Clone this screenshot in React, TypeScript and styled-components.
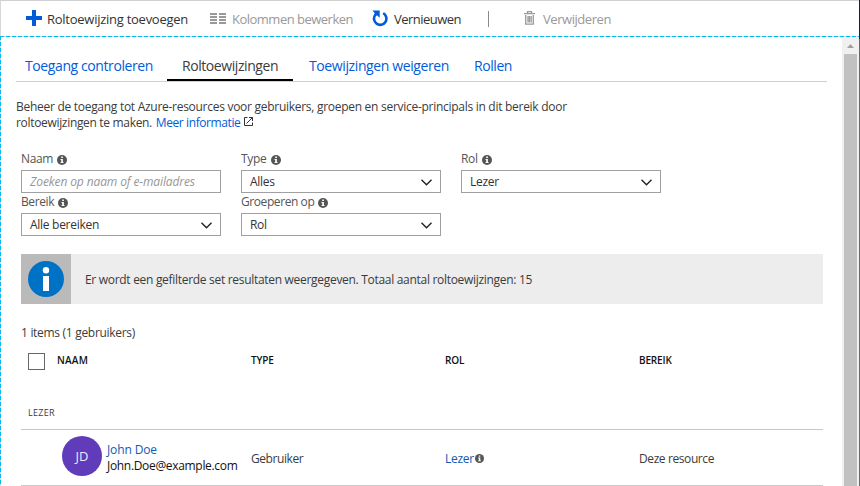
import React from 'react';
import styled, { createGlobalStyle } from 'styled-components';

const GlobalStyle = createGlobalStyle`
  * { box-sizing: border-box; }
  body {
    margin: 0;
    overflow: hidden;
    background: #fff;
    color: #3b3b3b;
    font: 12px/16px 'Open Sans', 'Noto Sans', sans-serif;
  }
  svg { display: block; flex: none; }
`;

const Text = styled.span<{ $track?: number }>`
  display: inline-block;
  white-space: nowrap;
  letter-spacing: ${(p) => p.$track ?? -0.3}px;
`;

const Window = styled.div`
  display: grid;
  grid-template-columns: 859px 1px;
  height: 486px;
`;

const WindowEdge = styled.div`
  background: linear-gradient(#202124 39px, #69696b 39px);
`;

const Blade = styled.div`
  display: flex;
  flex-direction: column;
  height: 486px;
  min-width: 0;
`;

const Toolbar = styled.header`
  display: flex;
  align-items: center;
  height: 36px;
  padding-left: 25px;
  border-top: 1px solid #d0d0d0;
  border-left: 1px solid #d8d8d8;
  font-size: 13px;
`;

const Command = styled.button<{ $width: number; $gap: number; $muted?: boolean }>`
  display: flex;
  align-items: center;
  gap: ${(p) => p.$gap}px;
  width: ${(p) => p.$width}px;
  padding: 0;
  border: 0;
  background: none;
  font: inherit;
  color: ${(p) => (p.$muted ? '#999' : '#333')};
  svg { margin-bottom: 1px; }
`;

const Separator = styled.div`
  width: 1px;
  height: 16px;
  margin: 1px 35px 0 0;
  background: #8a8a8a;
`;

const dashX = 'repeating-linear-gradient(90deg, #00bcf2 0 4px, #d5dde0 4px 6px)';
const dashY = 'repeating-linear-gradient(180deg, #00bcf2 0 4px, #d5dde0 4px 6px)';

const Pane = styled.div`
  flex: 1;
  display: flex;
  min-height: 0;
  padding: 1px 0 0 1px;
  background: ${dashX} 0 0 / 100% 1px no-repeat, ${dashY} 0 0 / 1px 100% no-repeat;
`;

const Content = styled.main`
  flex: 1;
  min-width: 0;
  padding-left: 15px;
`;

const ScrollTrack = styled.div`
  display: flex;
  flex-direction: column;
  align-items: center;
  width: 17px;
  padding: 7px 1px 0 0;
  background: #f0f0f0;
`;

const ScrollThumb = styled.div`
  flex: 1;
  width: 13px;
  margin: 6px 0 0 1px;
  background: #c1c1c1;
`;

const Tabs = styled.nav`
  display: flex;
  width: 811px;
  height: 45px;
  border-bottom: 1px solid #d0d0d0;
  font-size: 14px;
`;

const Tab = styled.a<{ $width: number; $inset: number; $active?: boolean }>`
  width: ${(p) => p.$width}px;
  padding: 21px 0 0 ${(p) => p.$inset}px;
  color: ${(p) => (p.$active ? '#3b3b3b' : '#015cda')};
  border-bottom: 2px solid ${(p) => (p.$active ? '#000' : 'transparent')};
`;

const Intro = styled.p`
  margin: 17px 0 19px;
`;

const IntroLine = styled.span`
  display: flex;
  align-items: center;
  svg { margin: -3px 0 0 4px; }
`;

const Link = styled(Text)`
  margin-left: 1px;
  color: #015cda;
`;

const Section = styled.div`
  width: 802px;
  margin-left: 5px;
`;

const Filters = styled.form`
  display: grid;
  grid-template-columns: repeat(3, 200px);
  column-gap: 20px;
`;

const Field = styled.label`
  display: block;
  height: 43px;
`;

const FieldLabel = styled.span`
  display: flex;
  align-items: center;
  gap: 4px;
  height: 20px;
  padding-bottom: 3px;
  color: #555;
  svg { margin-top: 3px; }
`;

const Control = styled.span<{ $placeholder?: boolean }>`
  display: flex;
  align-items: center;
  justify-content: space-between;
  height: 23px;
  padding: 0 8px;
  border: 1px solid #a0a0a0;
  color: ${(p) => (p.$placeholder ? '#969696' : '#333')};
  font-style: ${(p) => (p.$placeholder ? 'italic' : 'normal')};
  svg { margin-top: 2px; }
`;

const Banner = styled.div`
  display: flex;
  align-items: center;
  height: 50px;
  margin-top: 18px;
  background: #ededed;
`;

const BannerIcon = styled.div`
  display: grid;
  place-items: center;
  width: 50px;
  height: 50px;
  margin-right: 14px;
  background: #bababa;
`;

const BannerText = styled(Text)`
  padding-top: 2px;
`;

const Count = styled.div`
  height: 49px;
  padding-top: 21px;
`;

const Columns = styled.div`
  display: grid;
  grid-template-columns: 230px 194px 194px 1fr;
`;

const HeaderRow = styled(Columns)`
  height: 17px;
  color: #111;
  font-size: 10px;
  font-weight: 600;
  line-height: 15px;
`;

const HeaderName = styled.div`
  display: flex;
  padding-left: 7px;
`;

const Checkbox = styled.span`
  width: 17px;
  height: 17px;
  margin-right: 12px;
  border: 1px solid #666;
`;

const GroupRow = styled.div`
  height: 60px;
  padding: 35px 0 0 7px;
  border-bottom: 1px solid #c8c8c8;
  font-size: 9px;
`;

const DataRow = styled(Columns)`
  height: 56px;
  border-bottom: 1px solid #c8c8c8;
`;

const Cell = styled.div`
  display: flex;
  align-items: center;
  padding-top: 2px;
`;

const RoleCell = styled(Cell)`
  gap: 1px;
  svg { margin-top: -1px; }
`;

const Person = styled(Cell)`
  padding: 0 0 4px 41px;
`;

const Avatar = styled.span`
  display: grid;
  place-items: center;
  width: 40px;
  height: 40px;
  margin-right: 5px;
  border-radius: 50%;
  background: #603cba;
  color: #eee8ff;
  font-size: 13px;
`;

const PersonText = styled.div`
  display: flex;
  flex-direction: column;
  padding-top: 4px;
  color: #111;
`;

const DataLink = styled(Text)`
  color: #0f5bb5;
`;

const InfoIcon = ({ size = 10 }: { size?: number }) => (
  <svg width={size} height={size} viewBox="0 0 10 10">
    <circle cx="5" cy="5" r="5" fill="#555" />
    <path d="M4.2 1.6h1.7v1.4H4.2zM3.5 4h2.4v3.2h.8v.9H3.4v-.9h.8V4.9h-.7z" fill="#fff" />
  </svg>
);

const PlusIcon = () => (
  <svg width="16" height="16" viewBox="0 0 16 16">
    <path d="M6 0h4v6h6v4h-6v6H6v-6H0V6h6z" fill="#015cda" />
  </svg>
);

const ColumnsIcon = () => (
  <svg width="16" height="11" viewBox="0 0 16 11">
    <path d="M0 0h7v2H0zM9 0h7v2H9zM0 3h7v2H0zM9 3h7v2H9zM0 6h7v2H0zM9 6h7v2H9zM0 9h7v2H0zM9 9h7v2H9z" fill="#999" />
  </svg>
);

const RefreshIcon = () => (
  <svg width="16" height="17" viewBox="0 0 16 17">
    <path d="M11.2 3.2A6.2 6.2 0 1 1 3.4 4.7" fill="none" stroke="#015cda" strokeWidth="2.6" />
    <path d="M.5.5h7.2v7.2L5.2 5.4 3 6 2 4.6l.8-1.4z" fill="#015cda" />
  </svg>
);

const TrashIcon = () => (
  <svg width="11" height="14" viewBox="0 0 11 14">
    <path d="M3.5 2V.7h4V2M0 2.7h11M1.7 4v9.2h7.6V4M4 5v6.5M5.5 5v6.5M7.2 5v6.5" fill="none" stroke="#999" strokeWidth="1.3" />
  </svg>
);

const ExternalIcon = () => (
  <svg width="9" height="9" viewBox="0 0 9 9">
    <path d="M3.5.5h-3v8h8v-3M5 .5h3.5V4M8.5.5l-6 6" fill="none" stroke="#333" />
  </svg>
);

const ChevronIcon = () => (
  <svg width="11" height="7" viewBox="0 0 11 7">
    <path d="M.5.7l5 5 5-5" fill="none" stroke="#222" strokeWidth="1.4" />
  </svg>
);

const BigInfoIcon = () => (
  <svg width="36" height="36" viewBox="0 0 36 36">
    <circle cx="18" cy="18" r="18" fill="#0072c6" />
    <circle cx="18" cy="9.3" r="3.2" fill="#fff" />
    <path d="M15 15h6v15h-6z" fill="#fff" />
  </svg>
);

const ScrollUpIcon = () => (
  <svg width="7" height="4" viewBox="0 0 7 4">
    <path d="M3.5 0L7 4H0z" fill="#a0a0a0" />
  </svg>
);

const filters = [
  { label: 'Naam', labelTrack: -0.4, value: 'Zoeken op naam of e-mailadres', track: -0.11, input: true },
  { label: 'Type', labelTrack: -0.3, value: 'Alles', track: -0.3 },
  { label: 'Rol', labelTrack: -0.3, value: 'Lezer', track: -0.3 },
  { label: 'Bereik', labelTrack: -0.4, value: 'Alle bereiken', track: -0.28 },
  { label: 'Groeperen op', labelTrack: -0.42, value: 'Rol', track: -0.3 },
];

export default function App() {
  return (
    <>
      <GlobalStyle />
      <Window>
        <Blade>
          <Toolbar>
            <Command $width={184} $gap={5}><PlusIcon /><Text $track={-0.26}>Roltoewijzing toevoegen</Text></Command>
            <Command $width={162} $gap={6} $muted><ColumnsIcon /><Text $track={-0.51}>Kolommen bewerken</Text></Command>
            <Command $width={116} $gap={6}><RefreshIcon /><Text $track={-0.52}>Vernieuwen</Text></Command>
            <Separator />
            <Command $width={90} $gap={8} $muted><TrashIcon /><Text $track={-0.44}>Verwijderen</Text></Command>
          </Toolbar>
          <Pane>
            <Content>
              <Tabs>
                <Tab $width={151} $inset={9}><Text $track={-0.4}>Toegang controleren</Text></Tab>
                <Tab $width={126} $inset={15} $active><Text $track={-0.43}>Roltoewijzingen</Text></Tab>
                <Tab $width={164} $inset={16}><Text $track={-0.39}>Toewijzingen weigeren</Text></Tab>
                <Tab $width={76} $inset={17}><Text $track={-0.43}>Rollen</Text></Tab>
              </Tabs>
              <Intro>
                <IntroLine>
                  <Text $track={-0.28}>Beheer de toegang tot Azure-resources voor gebruikers, groepen en service-principals in dit bereik door</Text>
                </IntroLine>
                <IntroLine>
                  <Text $track={-0.32}>roltoewijzingen te maken.&nbsp;</Text>
                  <Link $track={-0.4}>Meer informatie</Link>
                  <ExternalIcon />
                </IntroLine>
              </Intro>
              <Section>
                <Filters>
                  {filters.map((f) => (
                    <Field key={f.label}>
                      <FieldLabel><Text $track={f.labelTrack}>{f.label}</Text><InfoIcon /></FieldLabel>
                      <Control $placeholder={f.input}>
                        <Text $track={f.track}>{f.value}</Text>
                        {!f.input && <ChevronIcon />}
                      </Control>
                    </Field>
                  ))}
                </Filters>
                <Banner>
                  <BannerIcon><BigInfoIcon /></BannerIcon>
                  <BannerText $track={-0.3}>Er wordt een gefilterde set resultaten weergegeven. Totaal aantal roltoewijzingen: 15</BannerText>
                </Banner>
                <Count><Text $track={-0.3}>1 items (1 gebruikers)</Text></Count>
                <HeaderRow>
                  <HeaderName><Checkbox /><Text $track={0.2}>NAAM</Text></HeaderName>
                  <Text $track={-0.15}>TYPE</Text>
                  <Text $track={-0.15}>ROL</Text>
                  <Text $track={-0.15}>BEREIK</Text>
                </HeaderRow>
                <GroupRow><Text $track={0.3}>LEZER</Text></GroupRow>
                <DataRow>
                  <Person>
                    <Avatar><Text $track={0}>JD</Text></Avatar>
                    <PersonText>
                      <DataLink $track={-0.12}>John Doe</DataLink>
                      <Text $track={-0.32}>John.Doe@example.com</Text>
                    </PersonText>
                  </Person>
                  <Cell><Text $track={-0.43}>Gebruiker</Text></Cell>
                  <RoleCell><DataLink $track={-0.3}>Lezer</DataLink><InfoIcon size={9} /></RoleCell>
                  <Cell><Text $track={-0.4}>Deze resource</Text></Cell>
                </DataRow>
              </Section>
            </Content>
            <ScrollTrack><ScrollUpIcon /><ScrollThumb /></ScrollTrack>
          </Pane>
        </Blade>
        <WindowEdge />
      </Window>
    </>
  );
}
